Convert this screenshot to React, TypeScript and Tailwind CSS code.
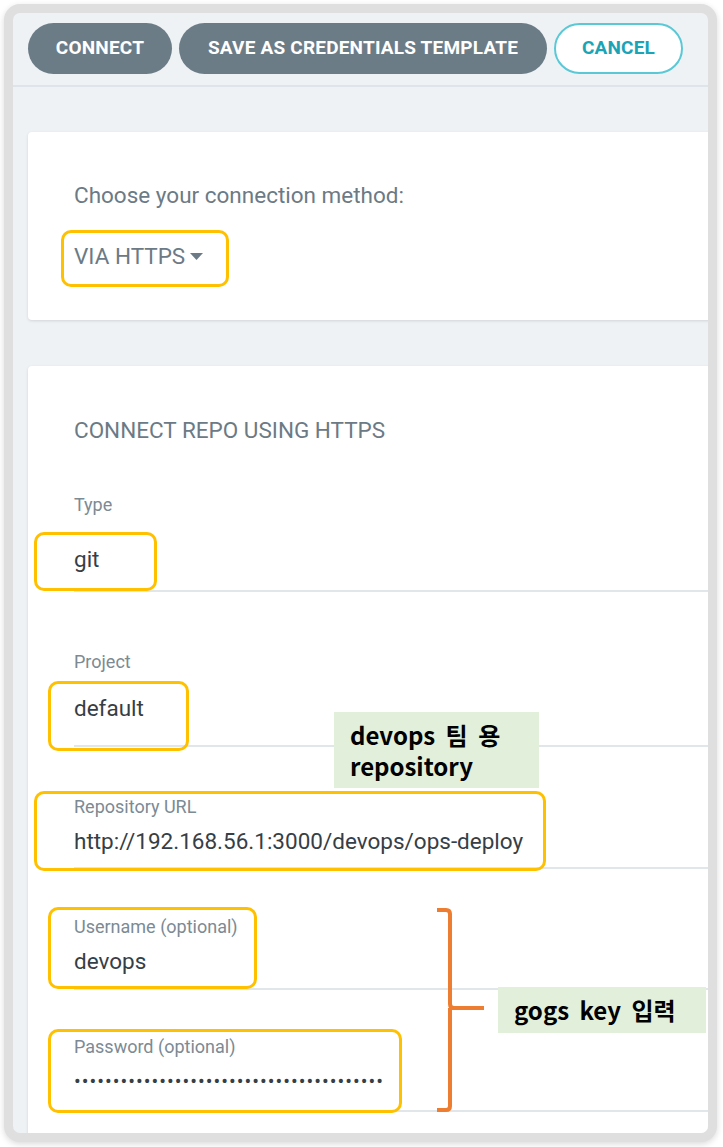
import React from 'react';

const font = { fontFamily: 'Roboto, "Noto Sans", sans-serif' };
const annoFont = { fontFamily: '"Noto Sans CJK KR", "Noto Sans", sans-serif', wordSpacing: '5px' };

type FieldProps = {
  label: string;
  value: React.ReactNode;
  top: string;
  gap: string;
  bottom: string;
};

const Field: React.FC<FieldProps> = ({ label, value, top, gap, bottom }) => (
  <div className={`${top} ${bottom} border-b-2 border-[#e1e6eb]`}>
    <div className="text-[18px] leading-[20px] text-[#7c8a94]">{label}</div>
    <div className={`${gap} text-[22.5px] leading-[28px] text-[#363e46]`}>{value}</div>
  </div>
);

// highlight boxes drawn on top of the screenshot
const marks = [
  'left-[61px] top-[230px] w-[168px] h-[57px]',
  'left-[34px] top-[532px] w-[123px] h-[59px]',
  'left-[48px] top-[681px] w-[141px] h-[70px]',
  'left-[34px] top-[791px] w-[512px] h-[80px]',
  'left-[48px] top-[907px] w-[209px] h-[82px]',
  'left-[48px] top-[1029px] w-[354px] h-[84px]',
];

export default function App() {
  return (
    <div className="relative w-[723px] h-[1147px] bg-white p-[4px]" style={font}>
      <div className="h-[1138px] w-[713px] rounded-[16px] border-[9px] border-[#dfdfdf] bg-[#eef2f5] overflow-hidden shadow-[0_2px_6px_rgba(0,0,0,0.15)]">
        {/* toolbar */}
        <div className="h-[74px] border-b-2 border-[#dde4ea] pl-[15px] pt-[10px] flex gap-[7px]">
          <button className="w-[144px] h-[51px] rounded-full bg-[#6c7c87] text-white font-bold text-[19px] tracking-[0.2px] flex items-center justify-center">
            CONNECT
          </button>
          <button className="w-[368px] h-[51px] rounded-full bg-[#6c7c87] text-white font-bold text-[19px] tracking-[0.2px] flex items-center justify-center">
            SAVE AS CREDENTIALS TEMPLATE
          </button>
          <button className="w-[129px] h-[51px] rounded-full bg-white border-2 border-[#5bc8d6] text-[#1ba3b6] font-bold text-[19px] tracking-[0.2px] flex items-center justify-center">
            CANCEL
          </button>
        </div>

        {/* connection method */}
        <div className="ml-[15px] mt-[45px] w-[700px] h-[188px] bg-white rounded-[4px] shadow-[0_1px_3px_rgba(0,0,0,0.12)] pl-[46px] pt-[49px]">
          <div className="text-[22.5px] leading-[28px] text-[#6c7a85]">Choose your connection method:</div>
          <div className="mt-[33px] flex items-center gap-[5px] text-[22.5px] leading-[28px] text-[#6c7a85]">
            VIA HTTPS
            <svg width="13" height="7" viewBox="0 0 13 7">
              <path d="M0 0 L13 0 L6.5 7 Z" fill="#6c7a85" />
            </svg>
          </div>
        </div>

        {/* repo form */}
        <div className="ml-[15px] mt-[46px] w-[700px] h-[800px] bg-white rounded-[4px] shadow-[0_1px_3px_rgba(0,0,0,0.12)] pl-[46px] pt-[50px]">
          <div className="text-[22.5px] leading-[28px] text-[#6c7a85]">CONNECT REPO USING HTTPS</div>
          <Field label="Type" value="git" top="mt-[51px]" gap="mt-[30px]" bottom="pb-[17px]" />
          <Field label="Project" value="default" top="mt-[60px]" gap="mt-[22px]" bottom="pb-[23px]" />
          <Field
            label="Repository URL"
            value="http://192.168.56.1:3000/devops/ops-deploy"
            top="mt-[50px]"
            gap="mt-[10px]"
            bottom="pb-[12px]"
          />
          <Field label="Username (optional)" value="devops" top="mt-[48px]" gap="mt-[10px]" bottom="pb-[13px]" />
          <Field
            label="Password (optional)"
            value={<span className="text-[20px] tracking-[1px]">{'•'.repeat(40)}</span>}
            top="mt-[47px]"
            gap="mt-[9px]"
            bottom="pb-[15px]"
          />
        </div>
      </div>

      {/* annotations */}
      {marks.map((m, i) => (
        <div key={i} className={`absolute ${m} border-[3px] border-[#ffc000] rounded-[10px]`} />
      ))}

      <div
        className="absolute left-[334px] top-[712px] w-[205px] h-[76px] bg-[#e2efda] pl-[16px] pt-[7px] text-[24px] leading-[31px] font-bold text-black"
        style={annoFont}
      >
        devops 팀 용
        <br />
        repository
      </div>

      <div
        className="absolute left-[498px] top-[987px] w-[208px] h-[46px] bg-[#e2efda] pl-[16px] flex items-center text-[24px] font-bold text-black"
        style={annoFont}
      >
        gogs key 입력
      </div>

      <svg className="absolute left-[432px] top-[904px]" width="60" height="214" viewBox="0 0 60 214">
        <path
          d="M5 6 L14 6 Q18 6 18 10 L18 100 Q18 104 22 104 L52 104 M18 104 Q18 104 18 108 L18 202 Q18 206 14 206 L5 206"
          fill="none"
          stroke="#ed7d31"
          strokeWidth="4"
        />
      </svg>
    </div>
  );
}
